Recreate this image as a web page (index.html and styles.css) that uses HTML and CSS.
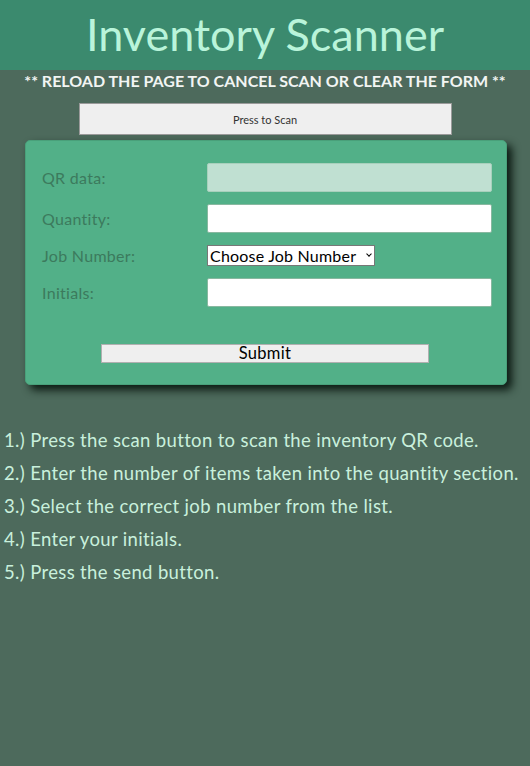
FILE: index.html
```html
<!DOCTYPE html>
<html>
<head>
<meta charset="utf-8">
<title>Inventory Scanner</title>
<link rel="stylesheet" href="styles.css">
</head>
<body>
<header class="top">
  <h1 class="title">Inventory Scanner</h1>
</header>
<p class="notice">** RELOAD THE PAGE TO CANCEL SCAN OR CLEAR THE FORM **</p>
<div class="scan-wrap"><button class="scan-btn" type="button">Press to Scan</button></div>
<form class="card">
  <div class="row">
    <label class="lbl">QR data:</label>
    <input class="field field-disabled" type="text" disabled>
  </div>
  <div class="row">
    <label class="lbl">Quantity:</label>
    <input class="field" type="text">
  </div>
  <div class="row row-select">
    <label class="lbl">Job Number:</label>
    <div class="sel-wrap"><select class="sel"><option>Choose Job Number</option></select></div>
  </div>
  <div class="row">
    <label class="lbl">Initials:</label>
    <input class="field" type="text">
  </div>
  <div class="submit-wrap"><button class="submit-btn" type="button">Submit</button></div>
</form>
<ol class="steps">
  <li>1.) Press the scan button to scan the inventory QR code.</li>
  <li>2.) Enter the number of items taken into the quantity section.</li>
  <li>3.) Select the correct job number from the list.</li>
  <li>4.) Enter your initials.</li>
  <li>5.) Press the send button.</li>
</ol>
</body>
</html>
```
FILE: styles.css
```css
html, body {
  margin: 0;
  padding: 0;
}
body {
  background: #4d6a5c;
  font-family: Lato, "Open Sans", sans-serif;
  width: 530px;
  min-height: 766px;
}
.top {
  background: #3b8a6e;
  height: 70px;
  display: flex;
  align-items: center;
  justify-content: center;
}
.title {
  margin: 0;
  font-weight: 400;
  font-size: 45px;
  color: #b9f4da;
  line-height: 1;
  padding-bottom: 2px;
}
.notice {
  margin: 2px 0 0;
  text-align: center;
  color: #f2f5f3;
  font-weight: 700;
  font-size: 16px;
  line-height: 18px;
  letter-spacing: 0;
}
.scan-wrap {
  display: flex;
  justify-content: center;
  margin-top: 13px;
}
.scan-btn {
  width: 373px;
  height: 32px;
  background: #efefef;
  border: 1px solid #9a9a9a;
  font-family: Lato, sans-serif;
  font-size: 11px;
  color: #333;
}
.card {
  margin: 5px 0 0 25px;
  width: 482px;
  height: 245px;
  box-sizing: border-box;
  background: #52b088;
  border-radius: 5px;
  border: 1px solid #49a07a;
  box-shadow: 5px 5px 8px #0b1a12;
  padding: 22px 14px 0 16px;
}
.row {
  display: grid;
  grid-template-columns: 165px 285px;
  align-items: center;
  margin-bottom: 12px;
}
.lbl {
  color: #3c7a5d;
  font-size: 16px;
  letter-spacing: 0.3px;
}
.field {
  height: 29px;
  box-sizing: border-box;
  border: 1px solid #88b8a0;
  border-radius: 2px;
  background: #fff;
  margin: 0;
}
.field-disabled {
  background: #c0e0d2;
  border-color: #a8d0bc;
}
.sel-wrap {
  position: relative;
  width: 168px;
  height: 21px;
}
.sel-wrap::after {
  content: "";
  position: absolute;
  right: 4px;
  top: 7px;
  width: 3px;
  height: 3px;
  border-right: 1.2px solid #000;
  border-bottom: 1.2px solid #000;
  transform: rotate(45deg);
  pointer-events: none;
}
.sel {
  appearance: none;
  -webkit-appearance: none;
  height: 21px;
  width: 168px;
  box-sizing: border-box;
  font-family: Lato, sans-serif;
  font-size: 16px;
  letter-spacing: 0.2px;
  color: #000;
  background: #fff;
  border: 1px solid #777;
  border-radius: 0;
  padding: 0 0 0 2px;
  margin: 0;
}
.submit-wrap {
  margin-top: 36px;
  padding-left: 59px;
}
.submit-btn {
  width: 328px;
  height: 19px;
  background: #efefef;
  border: 1px solid #b0b0b0;
  font-family: Lato, sans-serif;
  font-size: 16.5px;
  line-height: 15px;
  letter-spacing: 0.3px;
  padding: 0;
  color: #000;
}
.steps {
  list-style: none;
  margin: 39px 0 0;
  padding: 0 0 0 4px;
  color: #c9f0dc;
  font-size: 18.5px;
  letter-spacing: 0.35px;
}
.steps li {
  height: 33px;
  line-height: 33px;
}
```
